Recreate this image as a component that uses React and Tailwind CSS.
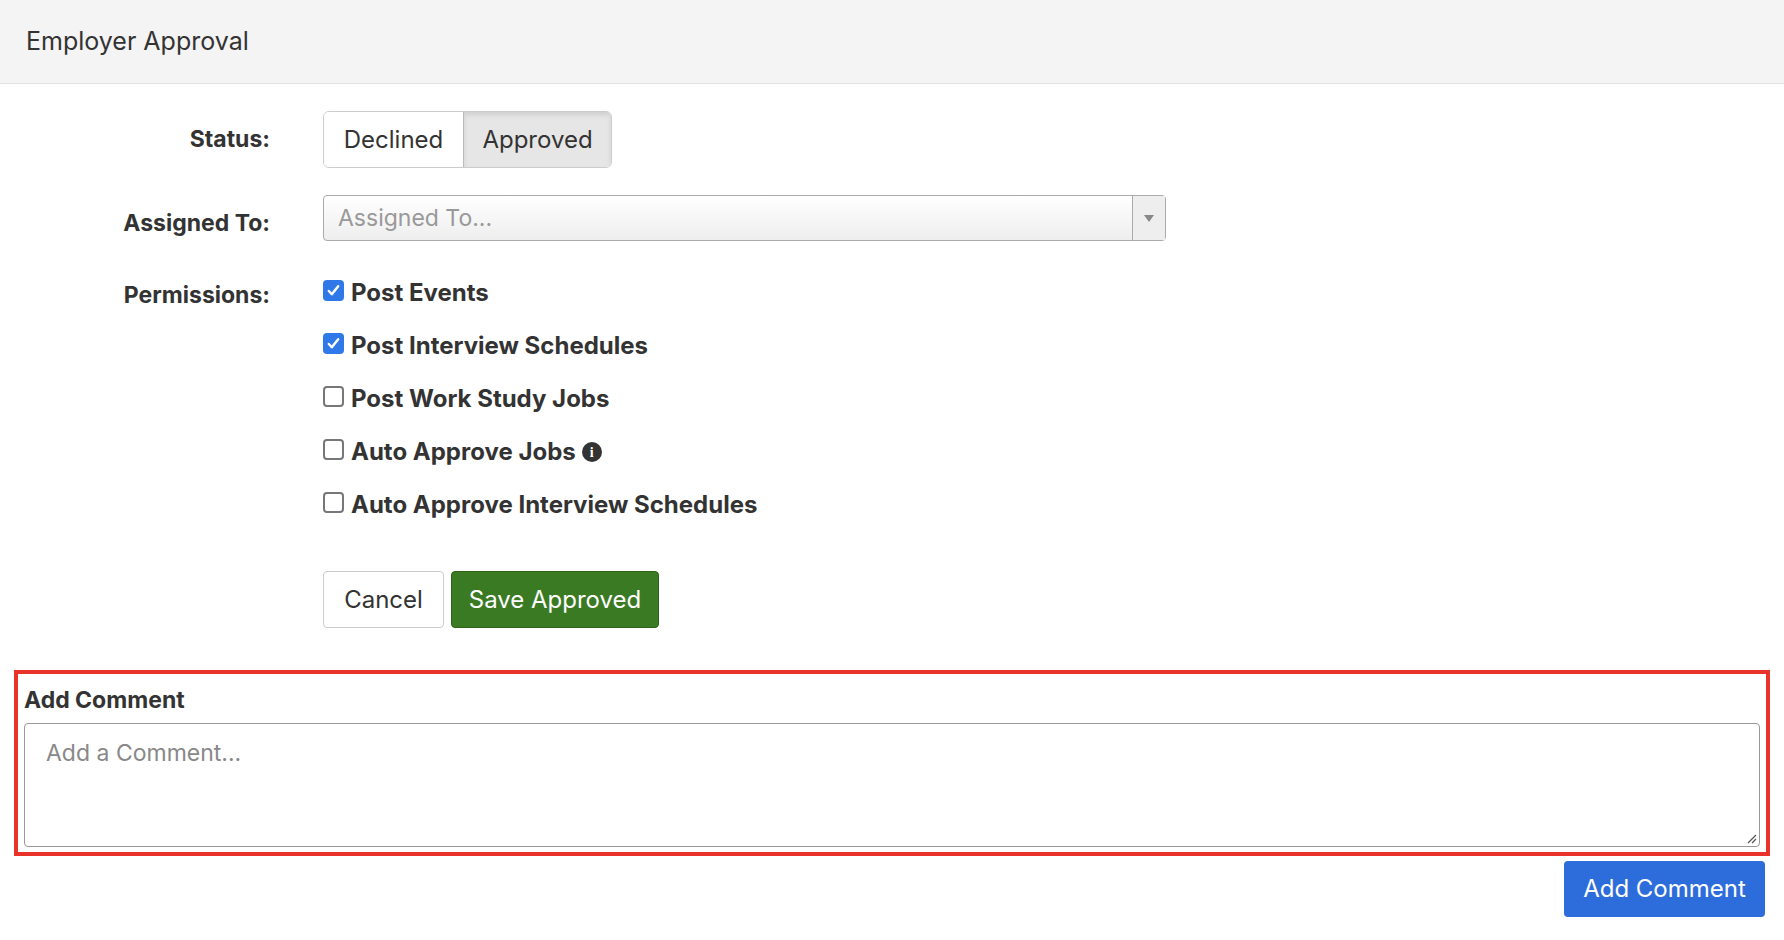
export default function App() {
  const perms = [
    ["Post Events", true],
    ["Post Interview Schedules", true],
    ["Post Work Study Jobs", false],
    ["Auto Approve Jobs", false, true],
    ["Auto Approve Interview Schedules", false],
  ];
  return (
    <div className="w-[1784px] h-[940px] bg-white text-[#333] overflow-hidden" style={{ fontFamily: "Inter, 'Liberation Sans', sans-serif" }}>
      <div className="h-[84px] bg-[#f4f4f4] border-b border-[#e0e0e0] flex items-center pl-[26px] text-[25px]">Employer Approval</div>
      <div className="flex mt-[27px]">
        <div className="w-[270px] shrink-0 flex flex-col items-end font-bold text-[23px]">
          <div className="h-[57px] flex items-center">Status:</div>
          <div className="h-[46px] mt-[28px] flex items-center translate-y-[4px]">Assigned To:</div>
          <div className="mt-[36px]">Permissions:</div>
        </div>
        <div className="ml-[53px] flex flex-col">
          <div className="flex h-[57px] text-[24px] rounded-md border border-[#ccc] w-fit overflow-hidden">
            <div className="w-[139px] flex items-center justify-center bg-white">Declined</div>
            <div className="w-[148px] flex items-center justify-center bg-[#e6e6e6] border-l border-[#bbb] shadow-[inset_0_3px_5px_rgba(0,0,0,0.1)]">Approved</div>
          </div>
          <div className="mt-[27px] w-[843px] h-[46px] rounded border border-[#aaa] bg-gradient-to-b from-white to-[#eee] flex items-center text-[23px] text-[#999]">
            <span className="pl-[14px] flex-1">Assigned To...</span>
            <div className="w-[33px] h-full border-l border-[#aaa] flex items-center justify-center bg-[#eee]">
              <div className="w-0 h-0 border-l-[5px] border-r-[5px] border-t-[7px] border-l-transparent border-r-transparent border-t-[#888]" />
            </div>
          </div>
          <div className="mt-[38px] flex flex-col gap-[25px]">
            {perms.map(([t, c, info]) => (
              <label key={t} className="flex items-center h-[28px] font-bold text-[24px]">
                {c ? (
                  <span className="w-[21px] h-[21px] rounded-[4px] bg-[#2f78e8] flex items-center justify-center -translate-y-[3px]">
                    <svg width="15" height="15" viewBox="0 0 16 16"><path d="M3 8.5l3.2 3.5L13 3.5" stroke="white" strokeWidth="2.6" fill="none" strokeLinecap="round" strokeLinejoin="round"/></svg>
                  </span>
                ) : (
                  <span className="w-[21px] h-[21px] rounded-[4px] border-2 border-[#777] bg-white -translate-y-[3px]" />
                )}
                <span className="ml-[7px]">{t}</span>
                {info && (
                  <span className="ml-[6px] w-[20px] h-[20px] rounded-full bg-[#333] text-white text-[14px] font-bold flex items-center justify-center" style={{ fontFamily: "'Liberation Serif', serif" }}>i</span>
                )}
              </label>
            ))}
          </div>
          <div className="mt-[52px] flex gap-[7px] text-[24px]">
            <div className="w-[121px] h-[57px] rounded border border-[#ccc] flex items-center justify-center">Cancel</div>
            <div className="w-[208px] h-[57px] rounded bg-[#3a7a23] border border-[#2d6419] text-white flex items-center justify-center">Save Approved</div>
          </div>
        </div>
      </div>
      <div className="mx-[14px] mt-[42px] h-[186px] border-4 border-[#e8322a] px-[6px] pt-[12px]">
        <div className="font-bold text-[23px] leading-[28px]">Add Comment</div>
        <div className="mt-[9px] h-[124px] rounded border border-[#999] relative text-[23px] text-[#888] pl-[21px] pt-[12px]">
          Add a Comment...
          <svg className="absolute right-[2px] bottom-[2px]" width="12" height="12" viewBox="0 0 12 12"><path d="M11 3L3 11M11 7L7 11" stroke="#555" strokeWidth="1.2"/></svg>
        </div>
      </div>
      <div className="flex justify-end pr-[19px] mt-[5px]">
        <div className="w-[201px] h-[56px] rounded bg-[#2d6cdb] text-white text-[24px] flex items-center justify-center">Add Comment</div>
      </div>
    </div>
  );
}
